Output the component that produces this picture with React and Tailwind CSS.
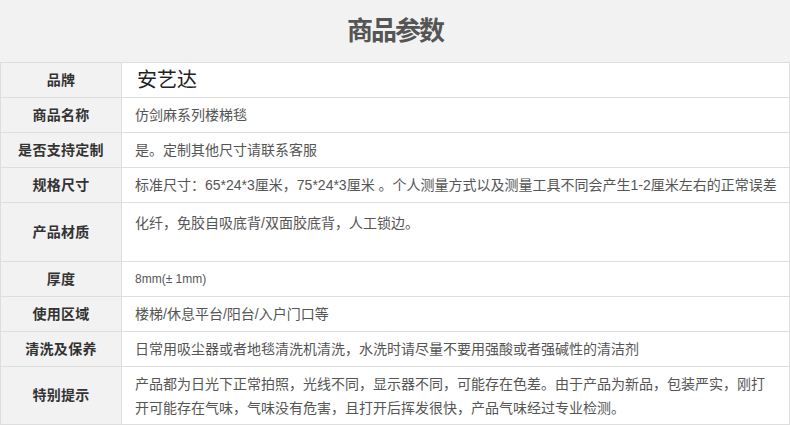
const font = { fontFamily: '"Liberation Sans", "Noto Sans CJK SC", sans-serif' }

const rows = [
  { label: '品牌', brand: true, value: '安艺达', h: 'h-[35px]' },
  { label: '商品名称', value: '仿剑麻系列楼梯毯', h: 'h-[35px]' },
  { label: '是否支持定制', value: '是。定制其他尺寸请联系客服', h: 'h-[35px]' },
  { label: '规格尺寸', value: '标准尺寸：65*24*3厘米，75*24*3厘米 。个人测量方式以及测量工具不同会产生1-2厘米左右的正常误差', h: 'h-[35px]' },
  { label: '产品材质', value: '化纤，免胶自吸底背/双面胶底背，人工锁边。', h: 'h-[59px]', top: true },
  { label: '厚度', value: '8mm(± 1mm)', h: 'h-[35px]', small: true },
  { label: '使用区域', value: '楼梯/休息平台/阳台/入户门口等', h: 'h-[35px]' },
  { label: '清洗及保养', value: '日常用吸尘器或者地毯清洗机清洗，水洗时请尽量不要用强酸或者强碱性的清洁剂', h: 'h-[35px]' },
  {
    label: '特别提示',
    lines: [
      '产品都为日光下正常拍照，光线不同，显示器不同，可能存在色差。由于产品为新品，包装严实，刚打',
      '开可能存在气味，气味没有危害，且打开后挥发很快，产品气味经过专业检测。',
    ],
    h: 'h-[58px]',
  },
]

export default function App() {
  return (
    <div className="w-[790px] h-[425px] overflow-hidden bg-[#f2f2f2]" style={font}>
      <div className="h-[62px] flex items-center justify-center text-[26px] font-bold text-[#555] tracking-[-2px]">
        商品参数
      </div>

      <div className="border-t border-x border-[#dedede]">
        {rows.map((row, i) => (
          <div key={i} className={`flex border-b border-[#dedede] ${row.h}`}>
            {/* Label */}
            <div className="w-[121px] shrink-0 flex items-center justify-center bg-[#f2f2f2] border-r border-[#dedede] text-[14px] font-bold text-[#333] tracking-[0.3px]">
              {row.label}
            </div>

            {/* Value */}
            <div
              className={`flex-1 bg-white pl-[13px] pr-2 text-[#555] whitespace-nowrap overflow-hidden flex ${
                row.top ? 'items-start pt-[8px]' : row.lines ? 'flex-col pt-[5px]' : 'items-center'
              }`}
            >
              {row.brand ? (
                <span className="text-[20px] text-[#222] pl-[2px]">{row.value}</span>
              ) : row.lines ? (
                row.lines.map((l, j) => (
                  <div key={j} className="text-[14px] leading-[24px]">{l}</div>
                ))
              ) : (
                <span className={`${row.small ? 'text-[12px]' : 'text-[14px]'} leading-[24px]`}>{row.value}</span>
              )}
            </div>
          </div>
        ))}
      </div>
    </div>
  )
}
